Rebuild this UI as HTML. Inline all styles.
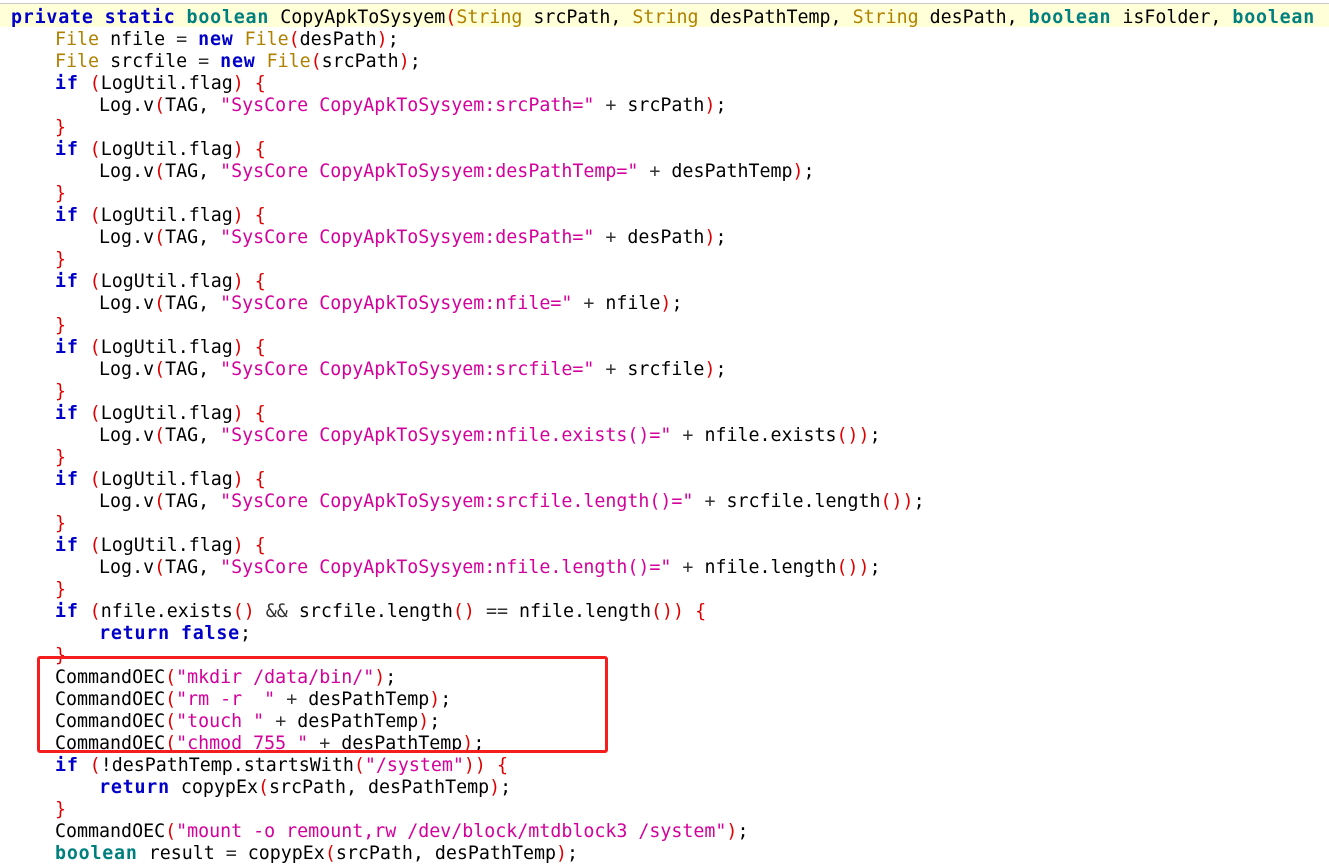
<!DOCTYPE html>
<html><head><meta charset="utf-8"><style>
html,body{margin:0;padding:0;background:#fff;width:1329px;height:868px;overflow:hidden}
pre{margin:0;position:absolute;left:11px;top:7px;font-family:"DejaVu Sans Mono","Liberation Mono",monospace;font-size:18.3px;line-height:22px;color:#000}
.k{color:#0000c8;font-weight:bold;letter-spacing:.8px}
.b{color:#007f7f;font-weight:bold;letter-spacing:.8px}
.t{color:#b08000}
.s{color:#d4009c}
.p{color:#e00000}
.o{color:#333}
.hl{position:absolute;left:0;top:3px;width:1329px;height:23px;background:#ffffd8;border-top:1px solid #c8c8c8}
.box{position:absolute;left:37px;top:656px;width:565px;height:91px;border:3px solid #f41e1e;border-radius:3px}
</style></head><body>
<div class="hl"></div>
<pre><span class="k">private</span> <span class="k">static</span> <span class="b">boolean</span> CopyApkToSysyem<span class="p">(</span><span class="t">String</span> srcPath, <span class="t">String</span> desPathTemp, <span class="t">String</span> desPath, <span class="b">boolean</span> isFolder, <span class="b">boolean</span>
    <span class="t">File</span> nfile <span class="o">=</span> <span class="k">new</span> <span class="t">File</span><span class="p">(</span>desPath<span class="p">)</span>;
    <span class="t">File</span> srcfile <span class="o">=</span> <span class="k">new</span> <span class="t">File</span><span class="p">(</span>srcPath<span class="p">)</span>;
    <span class="k">if</span> <span class="p">(</span>LogUtil.flag<span class="p">)</span> <span class="p">{</span>
        Log.v<span class="p">(</span>TAG, <span class="s">"SysCore CopyApkToSysyem:srcPath="</span> <span class="o">+</span> srcPath<span class="p">)</span>;
    <span class="p">}</span>
    <span class="k">if</span> <span class="p">(</span>LogUtil.flag<span class="p">)</span> <span class="p">{</span>
        Log.v<span class="p">(</span>TAG, <span class="s">"SysCore CopyApkToSysyem:desPathTemp="</span> <span class="o">+</span> desPathTemp<span class="p">)</span>;
    <span class="p">}</span>
    <span class="k">if</span> <span class="p">(</span>LogUtil.flag<span class="p">)</span> <span class="p">{</span>
        Log.v<span class="p">(</span>TAG, <span class="s">"SysCore CopyApkToSysyem:desPath="</span> <span class="o">+</span> desPath<span class="p">)</span>;
    <span class="p">}</span>
    <span class="k">if</span> <span class="p">(</span>LogUtil.flag<span class="p">)</span> <span class="p">{</span>
        Log.v<span class="p">(</span>TAG, <span class="s">"SysCore CopyApkToSysyem:nfile="</span> <span class="o">+</span> nfile<span class="p">)</span>;
    <span class="p">}</span>
    <span class="k">if</span> <span class="p">(</span>LogUtil.flag<span class="p">)</span> <span class="p">{</span>
        Log.v<span class="p">(</span>TAG, <span class="s">"SysCore CopyApkToSysyem:srcfile="</span> <span class="o">+</span> srcfile<span class="p">)</span>;
    <span class="p">}</span>
    <span class="k">if</span> <span class="p">(</span>LogUtil.flag<span class="p">)</span> <span class="p">{</span>
        Log.v<span class="p">(</span>TAG, <span class="s">"SysCore CopyApkToSysyem:nfile.exists()="</span> <span class="o">+</span> nfile.exists<span class="p">())</span>;
    <span class="p">}</span>
    <span class="k">if</span> <span class="p">(</span>LogUtil.flag<span class="p">)</span> <span class="p">{</span>
        Log.v<span class="p">(</span>TAG, <span class="s">"SysCore CopyApkToSysyem:srcfile.length()="</span> <span class="o">+</span> srcfile.length<span class="p">())</span>;
    <span class="p">}</span>
    <span class="k">if</span> <span class="p">(</span>LogUtil.flag<span class="p">)</span> <span class="p">{</span>
        Log.v<span class="p">(</span>TAG, <span class="s">"SysCore CopyApkToSysyem:nfile.length()="</span> <span class="o">+</span> nfile.length<span class="p">())</span>;
    <span class="p">}</span>
    <span class="k">if</span> <span class="p">(</span>nfile.exists<span class="p">()</span> <span class="o">&amp;&amp;</span> srcfile.length<span class="p">()</span> <span class="o">==</span> nfile.length<span class="p">())</span> <span class="p">{</span>
        <span class="k">return</span> <span class="k">false</span>;
    <span class="p">}</span>
    CommandOEC<span class="p">(</span><span class="s">"mkdir /data/bin/"</span><span class="p">)</span>;
    CommandOEC<span class="p">(</span><span class="s">"rm -r  "</span> <span class="o">+</span> desPathTemp<span class="p">)</span>;
    CommandOEC<span class="p">(</span><span class="s">"touch "</span> <span class="o">+</span> desPathTemp<span class="p">)</span>;
    CommandOEC<span class="p">(</span><span class="s">"chmod 755 "</span> <span class="o">+</span> desPathTemp<span class="p">)</span>;
    <span class="k">if</span> <span class="p">(</span>!desPathTemp.startsWith<span class="p">(</span><span class="s">"/system"</span><span class="p">))</span> <span class="p">{</span>
        <span class="k">return</span> copypEx<span class="p">(</span>srcPath, desPathTemp<span class="p">)</span>;
    <span class="p">}</span>
    CommandOEC<span class="p">(</span><span class="s">"mount -o remount,rw /dev/block/mtdblock3 /system"</span><span class="p">)</span>;
    <span class="b">boolean</span> result <span class="o">=</span> copypEx<span class="p">(</span>srcPath, desPathTemp<span class="p">)</span>;
</pre>
<div class="box"></div>
</body></html>
